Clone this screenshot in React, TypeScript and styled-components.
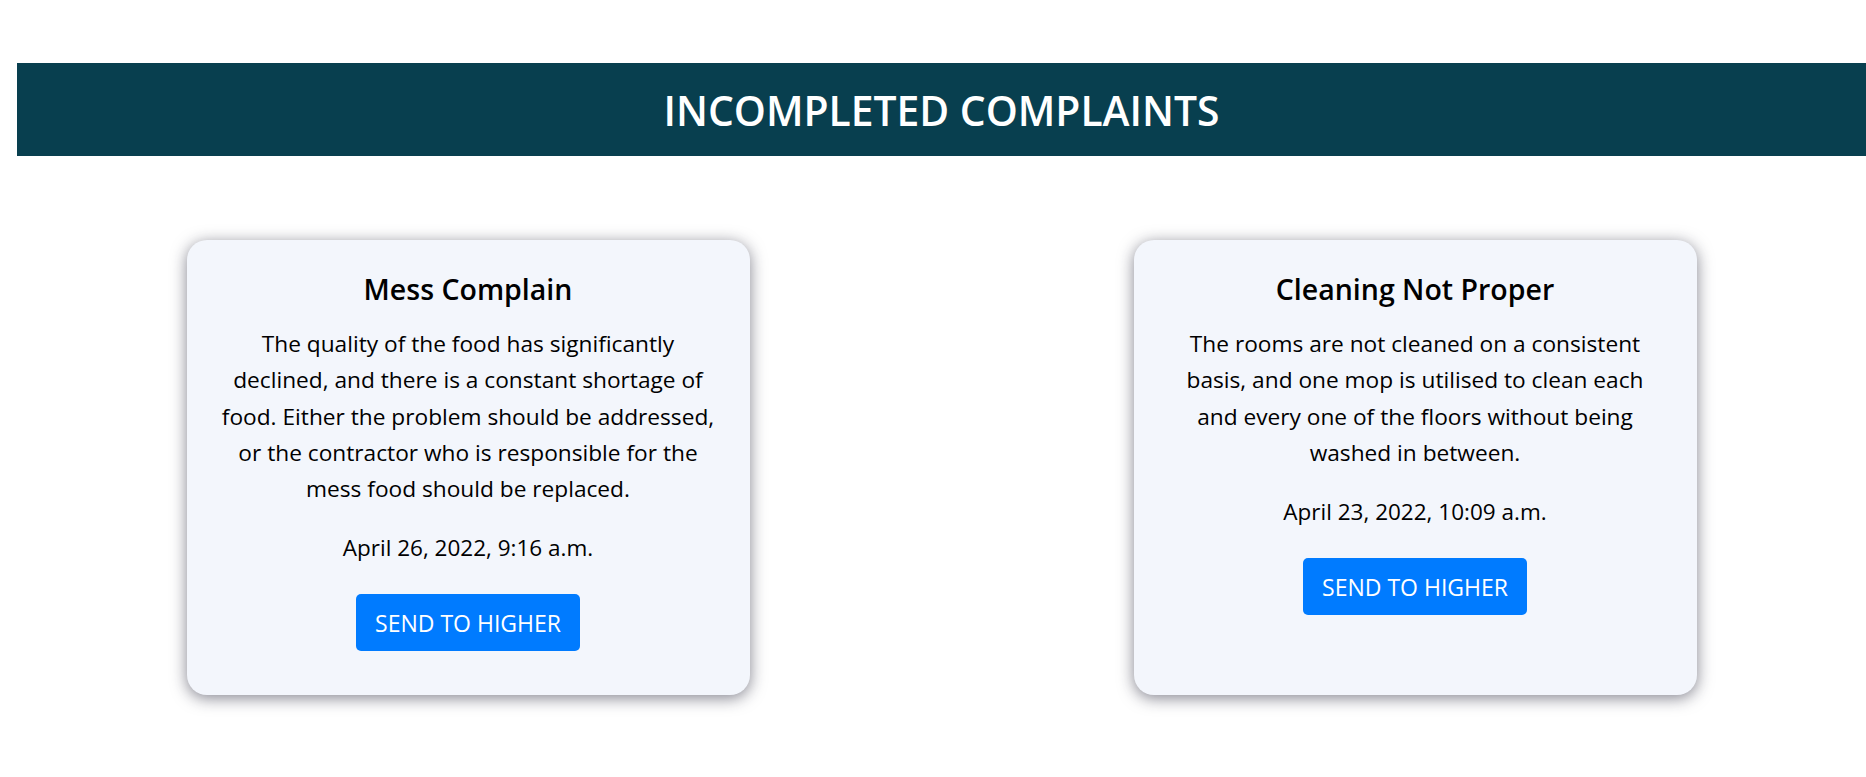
import React from "react";
import styled, { createGlobalStyle } from "styled-components";

const GlobalStyle = createGlobalStyle`
  html, body {
    margin: 0;
    padding: 0;
    background: #ffffff;
  }
  body {
    font-family: "Segoe UI", "Open Sans", "Noto Sans", sans-serif;
    color: #000000;
  }
`;

const Page = styled.div`
  padding: 63px 0 60px 17px;
`;

const Banner = styled.header`
  background: #083f4f;
  height: 93px;
  display: flex;
  align-items: center;
  justify-content: center;
`;

const BannerTitle = styled.h1`
  margin: 0;
  color: #ffffff;
  font-size: 40.8px;
  font-weight: 600;
  letter-spacing: 0;
`;

const CardRow = styled.section`
  display: flex;
  justify-content: center;
  align-items: stretch;
  gap: 384px;
  margin-top: 84px;
`;

const Card = styled.article`
  width: 563px;
  box-sizing: border-box;
  background: #f3f6fc;
  border-radius: 20px;
  box-shadow: 0 3px 16px rgba(30, 30, 50, 0.55);
  padding: 31px 32px 44px;
  display: flex;
  flex-direction: column;
  align-items: center;
  text-align: center;
`;

const CardTitle = styled.h2`
  margin: 0 0 19px;
  font-size: 28.5px;
  font-weight: 600;
  line-height: 36px;
`;

const CardBody = styled.p`
  margin: 0;
  font-size: 22.7px;
  line-height: 36.3px;
`;

const CardDate = styled.p`
  margin: 23px 0 0;
  font-size: 22.5px;
  line-height: 36px;
`;

const ActionButton = styled.button`
  margin-top: 28px;
  background: #007bff;
  color: #ffffff;
  border: none;
  border-radius: 5px;
  height: 57px;
  padding: 0 19px;
  font-family: inherit;
  font-size: 23px;
  cursor: pointer;
`;

type Complaint = {
  title: string;
  body: string;
  date: string;
};

const complaints: Complaint[] = [
  {
    title: "Mess Complain",
    body:
      "The quality of the food has significantly declined, and there is a constant shortage of food. Either the problem should be addressed, or the contractor who is responsible for the mess food should be replaced.",
    date: "April 26, 2022, 9:16 a.m.",
  },
  {
    title: "Cleaning Not Proper",
    body:
      "The rooms are not cleaned on a consistent basis, and one mop is utilised to clean each and every one of the floors without being washed in between.",
    date: "April 23, 2022, 10:09 a.m.",
  },
];

export default function App() {
  return (
    <Page>
      <GlobalStyle />
      <Banner>
        <BannerTitle>INCOMPLETED COMPLAINTS</BannerTitle>
      </Banner>
      <CardRow>
        {complaints.map((c) => (
          <Card key={c.title}>
            <CardTitle>{c.title}</CardTitle>
            <CardBody>{c.body}</CardBody>
            <CardDate>{c.date}</CardDate>
            <ActionButton>SEND TO HIGHER</ActionButton>
          </Card>
        ))}
      </CardRow>
    </Page>
  );
}
